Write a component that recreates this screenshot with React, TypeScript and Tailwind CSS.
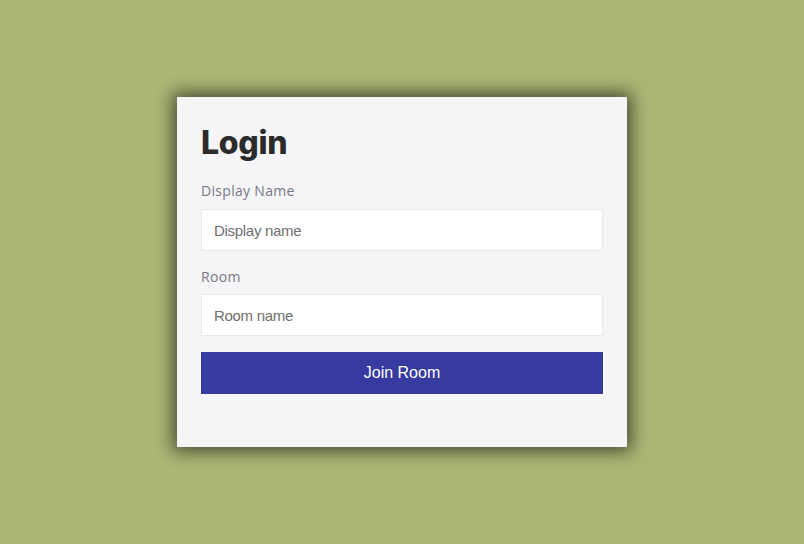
import React from "react";

export default function App() {
  return (
    <div className="h-screen w-full bg-[#abb574] flex items-center justify-center">
      <div className="w-[450px] h-[350px] bg-[#f5f5f7] px-6 pt-[27px] shadow-[0_0_16px_4px_rgba(0,0,0,0.6)]">
        <h1 className="font-['Inter','Noto_Sans',sans-serif] text-[32px] leading-[38px] font-extrabold text-[#2b2b2b] tracking-[-0.3px]">
          Login
        </h1>
        <label className="font-['Open_Sans','Noto_Sans',sans-serif] block mt-[19px] text-sm leading-5 tracking-[0.3px] text-[#787884]">
          Display Name
        </label>
        <input
          className="font-['Liberation_Sans',Arial,sans-serif] mt-2 block w-full h-[42px] bg-white border border-[#e8e8ea] px-3 text-[15px] tracking-[-0.3px] text-[#555] placeholder:text-[#707070] outline-none"
          placeholder="Display name"
        />
        <label className="font-['Open_Sans','Noto_Sans',sans-serif] block mt-[16px] text-sm leading-5 tracking-[0.3px] text-[#787884]">
          Room
        </label>
        <input
          className="font-['Liberation_Sans',Arial,sans-serif] mt-[7px] block w-full h-[42px] bg-white border border-[#e8e8ea] px-3 text-[15px] tracking-[-0.3px] text-[#555] placeholder:text-[#707070] outline-none"
          placeholder="Room name"
        />
        <button className="font-['Liberation_Sans',Arial,sans-serif] mt-4 block w-full h-[42px] bg-[#373a9e] text-white text-base">
          Join Room
        </button>
      </div>
    </div>
  );
}
